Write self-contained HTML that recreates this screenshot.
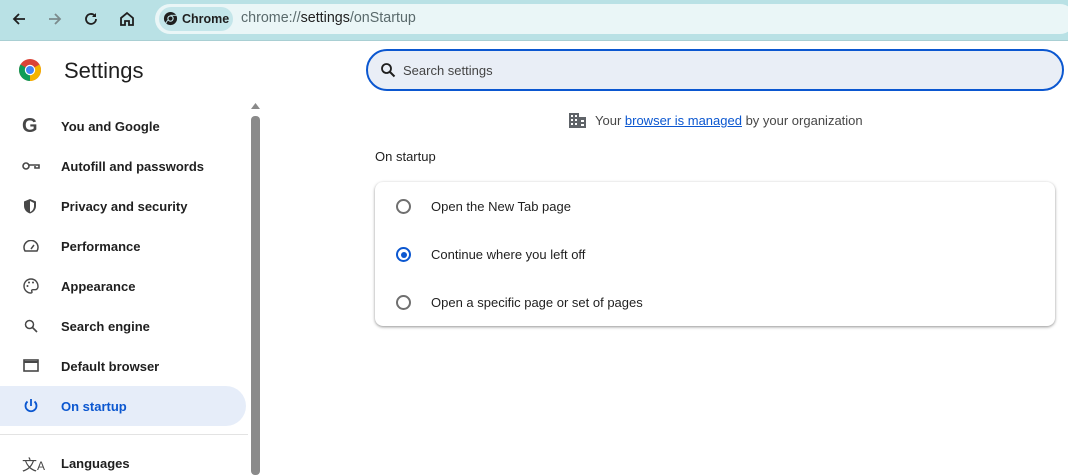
<!DOCTYPE html>
<html><head><style>
*{box-sizing:border-box;margin:0;padding:0}
body{width:1068px;height:475px;overflow:hidden;background:#fff;font-family:"Liberation Sans",Arial,sans-serif;color:#1f1f1f;position:relative}
.tb{position:absolute;left:0;top:0;width:1068px;height:41px;background:#b9e1e5;border-bottom:1px solid #a9cfd3}
.omni{position:absolute;left:155px;top:4px;width:920px;height:30px;border-radius:15px;background:#eaf6f7}
.chip{position:absolute;left:159px;top:7px;width:74px;height:24px;border-radius:12px;background:#c4e6ea;font-size:12.5px;font-weight:bold;line-height:24px;padding-left:23px;color:#1f1f1f}
.url{position:absolute;left:241px;top:10px;font-size:14.3px;color:#5a6a6c}
.url b{font-weight:normal;color:#1f1f1f}
.ic{position:absolute}
.title{position:absolute;left:64px;top:58px;font-size:22px;color:#1f1f1f}
.search{position:absolute;left:366px;top:49px;width:698px;height:42px;border:2px solid #0b57d0;border-radius:21px;background:#e9eef6}
.search span{position:absolute;left:35px;top:12px;font-size:13px;color:#444}
.nav{position:absolute;left:61px;font-size:13px;font-weight:bold;color:#1f1f1f}
.sel{position:absolute;left:0;top:386px;width:246px;height:40px;background:#e6edf9;border-radius:0 20px 20px 0}
.sb{position:absolute;left:251px;top:116px;width:9px;height:359px;background:#8a8a8a;border-radius:4px}
.card{position:absolute;left:375px;top:182px;width:680px;height:144px;border-radius:8px;background:#fff;box-shadow:0 1px 3px rgba(0,0,0,.3),0 1px 2px rgba(0,0,0,.15)}
.opt{position:absolute;left:56px;font-size:13px;color:#1f1f1f}
.rad{position:absolute;left:21px;width:15px;height:15px;border:2px solid #6f6f6f;border-radius:50%}
</style></head><body>
<div class="tb"></div>
<svg class="ic" style="left:10px;top:10px" width="18" height="18" viewBox="0 0 18 18"><path d="M15 9H4M9 4L4 9l5 5" stroke="#1f1f1f" stroke-width="1.8" fill="none"/></svg>
<svg class="ic" style="left:46px;top:10px" width="18" height="18" viewBox="0 0 18 18"><path d="M3 9h11M9 4l5 5-5 5" stroke="#7b8a8c" stroke-width="1.8" fill="none"/></svg>
<svg class="ic" style="left:82px;top:10px" width="18" height="18" viewBox="0 0 18 18"><path d="M14 9a5 5 0 1 1-1.5-3.6" stroke="#1f1f1f" stroke-width="1.8" fill="none"/><path d="M14 3v4h-4z" fill="#1f1f1f"/></svg>
<svg class="ic" style="left:118px;top:10px" width="18" height="18" viewBox="0 0 18 18"><path d="M3 8l6-5 6 5v7h-4v-4H7v4H3z" stroke="#1f1f1f" stroke-width="1.8" fill="none"/></svg>
<div class="omni"></div>
<div class="chip">Chrome</div>
<svg class="ic" style="left:163px;top:11px" width="15" height="15" viewBox="0 0 16 16"><circle cx="8" cy="8" r="7" fill="#1f1f1f"/><circle cx="8" cy="8" r="3.4" fill="#c4e6ea"/><circle cx="8" cy="8" r="2.2" fill="#1f1f1f"/><path d="M8 4.6h6.5" stroke="#c4e6ea" stroke-width="1"/><path d="M5 9.7L1.8 15" stroke="#c4e6ea" stroke-width="1"/></svg>
<div class="url">chrome://<b>settings</b>/onStartup</div>

<svg class="ic" style="left:18px;top:58px" width="24" height="24" viewBox="0 0 24 24"><circle cx="12" cy="12" r="11" fill="#db4437"/><path d="M12 12L2.5 6.5A11 11 0 0 0 12 23z" fill="#0f9d58"/><path d="M12 12L21.5 6.5A11 11 0 0 1 12 23z" fill="#f4b400"/><circle cx="12" cy="12" r="5.2" fill="#fff"/><circle cx="12" cy="12" r="4" fill="#4285f4"/></svg>
<div class="title">Settings</div>
<div class="search"><span>Search settings</span></div>
<svg class="ic" style="left:380px;top:62px" width="16" height="16" viewBox="0 0 16 16"><circle cx="6.5" cy="6.5" r="4.5" stroke="#1f1f1f" stroke-width="1.8" fill="none"/><path d="M10 10l4.5 4.5" stroke="#1f1f1f" stroke-width="2"/></svg>

<svg class="ic" style="left:251px;top:103px" width="9" height="6"><path d="M0 6L4.5 0 9 6z" fill="#8a8a8a"/></svg>
<div class="sb"></div>
<div class="sel"></div>
<div style="position:absolute;left:0;top:434px;width:248px;height:1px;background:#e3e3e3"></div>

<div style="position:absolute;left:22px;top:115px;font-size:20px;font-weight:bold;color:#474747">G</div>
<div class="nav" style="top:119px">You and Google</div>
<svg class="ic" style="left:22px;top:161px" width="18" height="10" viewBox="0 0 18 10"><circle cx="4" cy="5" r="3" stroke="#474747" stroke-width="1.6" fill="none"/><path d="M7 4h10v3h-4v-2" stroke="#474747" stroke-width="1.6" fill="none"/></svg>
<div class="nav" style="top:159px">Autofill and passwords</div>
<svg class="ic" style="left:23px;top:198px" width="14" height="16" viewBox="0 0 14 16"><path d="M7 1L1 3.5v4.5c0 3.5 2.6 6.5 6 7.5 3.4-1 6-4 6-7.5V3.5z" fill="#474747"/><path d="M7 3v11c2.3-.9 4-3.2 4-6V5z" fill="#fff"/></svg>
<div class="nav" style="top:199px">Privacy and security</div>
<svg class="ic" style="left:23px;top:240px" width="16" height="12" viewBox="0 0 16 12"><path d="M2 11A7 7 0 1 1 14 11z" stroke="#474747" stroke-width="1.5" fill="none"/><path d="M8 9l3-4" stroke="#474747" stroke-width="1.5"/></svg>
<div class="nav" style="top:239px">Performance</div>
<svg class="ic" style="left:23px;top:278px" width="16" height="16" viewBox="0 0 16 16"><path d="M8 1a7 7 0 0 0 0 14c1 0 1.3-.8.8-1.6-.5-.8 0-1.7 1-1.7H12a3 3 0 0 0 3-3C15 4 12 1 8 1z" stroke="#474747" stroke-width="1.4" fill="none"/><circle cx="4.5" cy="8" r="1" fill="#474747"/><circle cx="6" cy="4.5" r="1" fill="#474747"/><circle cx="10" cy="4.5" r="1" fill="#474747"/></svg>
<div class="nav" style="top:279px">Appearance</div>
<svg class="ic" style="left:24px;top:319px" width="14" height="14" viewBox="0 0 14 14"><circle cx="5.5" cy="5.5" r="4" stroke="#474747" stroke-width="1.5" fill="none"/><path d="M8.5 8.5l4.5 4.5" stroke="#474747" stroke-width="1.6"/></svg>
<div class="nav" style="top:319px">Search engine</div>
<svg class="ic" style="left:23px;top:359px" width="16" height="13" viewBox="0 0 16 13"><rect x="1" y="1" width="14" height="11" stroke="#474747" stroke-width="1.6" fill="none"/><path d="M1 3h14" stroke="#474747" stroke-width="2"/></svg>
<div class="nav" style="top:359px">Default browser</div>
<svg class="ic" style="left:23px;top:398px" width="16" height="16" viewBox="0 0 16 16"><path d="M8 1v7" stroke="#0b57d0" stroke-width="1.8"/><path d="M4.5 3.5a5.5 5.5 0 1 0 7 0" stroke="#0b57d0" stroke-width="1.8" fill="none"/></svg>
<div class="nav" style="top:399px;color:#0b57d0">On startup</div>
<div style="position:absolute;left:22px;top:454px;font-size:15px;color:#474747">文<span style="font-size:12px">A</span></div>
<div class="nav" style="top:456px">Languages</div>

<svg class="ic" style="left:569px;top:113px" width="17" height="15" viewBox="0 0 17 15"><rect x="0" y="0" width="10" height="15" fill="#5f6368"/><rect x="10" y="4" width="7" height="11" fill="#5f6368"/><g fill="#fff"><rect x="2" y="2" width="2" height="2"/><rect x="6" y="2" width="2" height="2"/><rect x="2" y="6" width="2" height="2"/><rect x="6" y="6" width="2" height="2"/><rect x="2" y="10" width="2" height="2"/><rect x="6" y="10" width="2" height="2"/><rect x="12" y="7" width="3" height="2"/><rect x="12" y="11" width="3" height="2"/></g></svg>
<div style="position:absolute;left:595px;top:113px;font-size:13px;color:#474747">Your <span style="color:#0b57d0;text-decoration:underline">browser is managed</span> by your organization</div>
<div style="position:absolute;left:375px;top:149px;font-size:13px;color:#1f1f1f">On startup</div>
<div class="card">
<div class="rad" style="top:17px"></div><div class="opt" style="top:17px">Open the New Tab page</div>
<div class="rad" style="top:65px;border-color:#0b57d0"><div style="position:absolute;left:2.5px;top:2.5px;width:6px;height:6px;border-radius:50%;background:#0b57d0"></div></div><div class="opt" style="top:65px">Continue where you left off</div>
<div class="rad" style="top:113px"></div><div class="opt" style="top:113px">Open a specific page or set of pages</div>
</div>
</body></html>
